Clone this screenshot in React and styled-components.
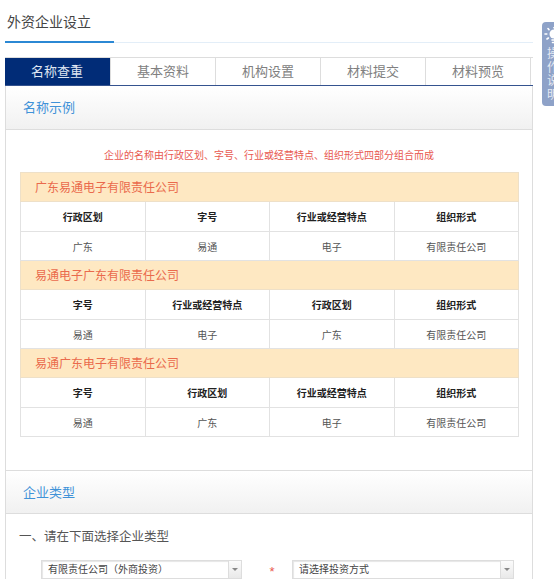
import React from "react";
import styled, { createGlobalStyle } from "styled-components";

const GlobalStyle = createGlobalStyle`
  html, body {
    margin: 0;
    padding: 0;
    background: #fff;
    overflow: hidden;
  }
  body {
    font-family: "Liberation Sans", "Noto Sans CJK SC", sans-serif;
    color: #555;
  }
`;

const Page = styled.div`
  position: relative;
  width: 554px;
  height: 581px;
  overflow: hidden;
  padding: 0 21px 0 5px;
  box-sizing: border-box;
`;

const PageHead = styled.div`
  height: 43px;
  box-sizing: border-box;
  border-bottom: 1px solid #e3eef8;
  position: relative;
  margin-bottom: 14px;
`;

const PageTitle = styled.h1`
  margin: 0;
  padding: 13px 0 0 2px;
  font-size: 14px;
  line-height: 18px;
  font-weight: 400;
  color: #444;
`;

const TitleMark = styled.span`
  position: absolute;
  left: 0;
  bottom: -1px;
  width: 109px;
  height: 2px;
  background: #2b88d4;
`;

const Tabs = styled.div`
  display: flex;
  height: 29px;
  box-sizing: border-box;
  border-top: 1px solid #ddd;
  border-bottom: 1px solid #35538f;
`;

const Tab = styled.div`
  width: 105px;
  box-sizing: border-box;
  border-right: 1px solid #ddd;
  text-align: center;
  font-size: 13px;
  line-height: 27px;
  color: ${(p) => (p.$active ? "#dfe6f2" : "#808080")};
  background: ${(p) => (p.$active ? "#012c77" : "#fff")};

  &:first-child {
    width: 106px;
    padding-right: 1px;
  }
`;

const Panel = styled.div`
  border-left: 1px solid #ddd;
  border-right: 1px solid #ddd;
`;

const SectionHead = styled.div`
  height: 44px;
  box-sizing: border-box;
  border-bottom: 1px solid #ddd;
  border-top: ${(p) => (p.$top ? "1px solid #ddd" : "0")};
  background: linear-gradient(#fff, #f1f1f1);
  padding-left: 17px;
  font-size: 13px;
  line-height: 44px;
  color: #3f92d8;
`;

const Note = styled.p`
  margin: 0;
  padding: 20px 0 10px;
  text-align: center;
  font-size: 10px;
  line-height: 12px;
  color: #e8584f;
`;

const NameTable = styled.table`
  width: 499px;
  margin: 0 0 33px 14px;
  border-collapse: collapse;
  table-layout: fixed;
  font-size: 10px;
  color: #555;

  th, td {
    border: 1px solid #e2e2e2;
    text-align: center;
    padding: 0;
  }
  th {
    height: 29px;
    color: #222;
    font-weight: 700;
  }
  td {
    height: 28px;
  }
`;

const NameRow = styled.th.attrs({ colSpan: 4 })`
  && {
    height: 27px;
    background: #fee8c2;
    border-color: #eee0c8;
    padding: 0 0 1px 14px;
    text-align: left;
    font-size: 12px;
    font-weight: 400;
    color: #ea6a4c;
  }
`;

const Question = styled.div`
  padding: 15px 0 0 13px;
  font-size: 12.5px;
  line-height: 16px;
  color: #555;
`;

const SelectRow = styled.div`
  display: flex;
  align-items: center;
  padding: 15px 0 0 35px;
`;

const Select = styled.div`
  display: flex;
  width: ${(p) => p.$w}px;
  height: 19px;
  box-sizing: border-box;
  border: 1px solid #ddd;
  box-shadow: inset 1px 1px 1px #e6e6e6;
  font-size: 10px;
  line-height: 18px;
  color: #444;
`;

const SelectText = styled.span`
  flex: 1;
  padding-left: 6px;
`;

const SelectArrow = styled.span`
  width: 12px;
  display: flex;
  align-items: center;
  justify-content: center;
  border-left: 1px solid #ddd;
  background: linear-gradient(#fbfbfb, #e9e9e9);

  &::after {
    content: "";
    border: 3px solid transparent;
    border-top-color: #888;
    border-bottom: 0;
  }
`;

const Star = styled.span`
  width: 50px;
  padding: 5px 0 0 10px;
  box-sizing: border-box;
  text-align: center;
  font-size: 13px;
  line-height: 14px;
  color: #e8584f;
`;

const HelpTab = styled.div`
  position: absolute;
  left: 542px;
  top: 22px;
  width: 26px;
  height: 84px;
  box-sizing: border-box;
  border-radius: 4px;
  background: #8ea2c8;
  padding: 5px 0 0 2px;
  color: #e6eaf3;
  font-size: 12px;
  line-height: 13.5px;
`;

const HelpText = styled.div`
  margin: 3px 0 0 3px;
  width: 13px;
`;

const examples = [
  {
    name: "广东易通电子有限责任公司",
    heads: ["行政区划", "字号", "行业或经营特点", "组织形式"],
    cells: ["广东", "易通", "电子", "有限责任公司"],
  },
  {
    name: "易通电子广东有限责任公司",
    heads: ["字号", "行业或经营特点", "行政区划", "组织形式"],
    cells: ["易通", "电子", "广东", "有限责任公司"],
  },
  {
    name: "易通广东电子有限责任公司",
    heads: ["字号", "行政区划", "行业或经营特点", "组织形式"],
    cells: ["易通", "广东", "电子", "有限责任公司"],
  },
];

const tabs = ["名称查重", "基本资料", "机构设置", "材料提交", "材料预览"];

const BulbIcon = () => (
  <svg width="20" height="18" viewBox="0 0 20 18" fill="none" stroke="#fff" strokeWidth="1.6" strokeLinecap="round" style={{ display: "block" }}>
    <circle cx="10" cy="7" r="4.5" fill="#fff" stroke="none" />
    <path d="M8 13h4M8.5 15.5h3M10 0v.8M4 1.5l1 1.2M16 1.5l-1 1.2M1 7h1.8M17.2 7H19M3 12l1.4-1M17 12l-1.4-1" />
  </svg>
);

export default function App() {
  return (
    <Page>
      <GlobalStyle />
      <PageHead>
        <PageTitle>外资企业设立</PageTitle>
        <TitleMark />
      </PageHead>

      <Tabs>
        {tabs.map((t, i) => (
          <Tab key={t} $active={i === 0}>{t}</Tab>
        ))}
      </Tabs>

      <Panel>
        <SectionHead>名称示例</SectionHead>
        <Note>企业的名称由行政区划、字号、行业或经营特点、组织形式四部分组合而成</Note>
        <NameTable>
          <tbody>
            {examples.map((ex) => (
              <React.Fragment key={ex.name}>
                <tr><NameRow>{ex.name}</NameRow></tr>
                <tr>{ex.heads.map((h) => <th key={h}>{h}</th>)}</tr>
                <tr>{ex.cells.map((c) => <td key={c}>{c}</td>)}</tr>
              </React.Fragment>
            ))}
          </tbody>
        </NameTable>

        <SectionHead $top>企业类型</SectionHead>
        <Question>一、请在下面选择企业类型</Question>
        <SelectRow>
          <Select $w={201}>
            <SelectText>有限责任公司（外商投资）</SelectText>
            <SelectArrow />
          </Select>
          <Star>*</Star>
          <Select $w={222}>
            <SelectText>请选择投资方式</SelectText>
            <SelectArrow />
          </Select>
        </SelectRow>
      </Panel>

      <HelpTab>
        <BulbIcon />
        <HelpText>操作说明</HelpText>
      </HelpTab>
    </Page>
  );
}
